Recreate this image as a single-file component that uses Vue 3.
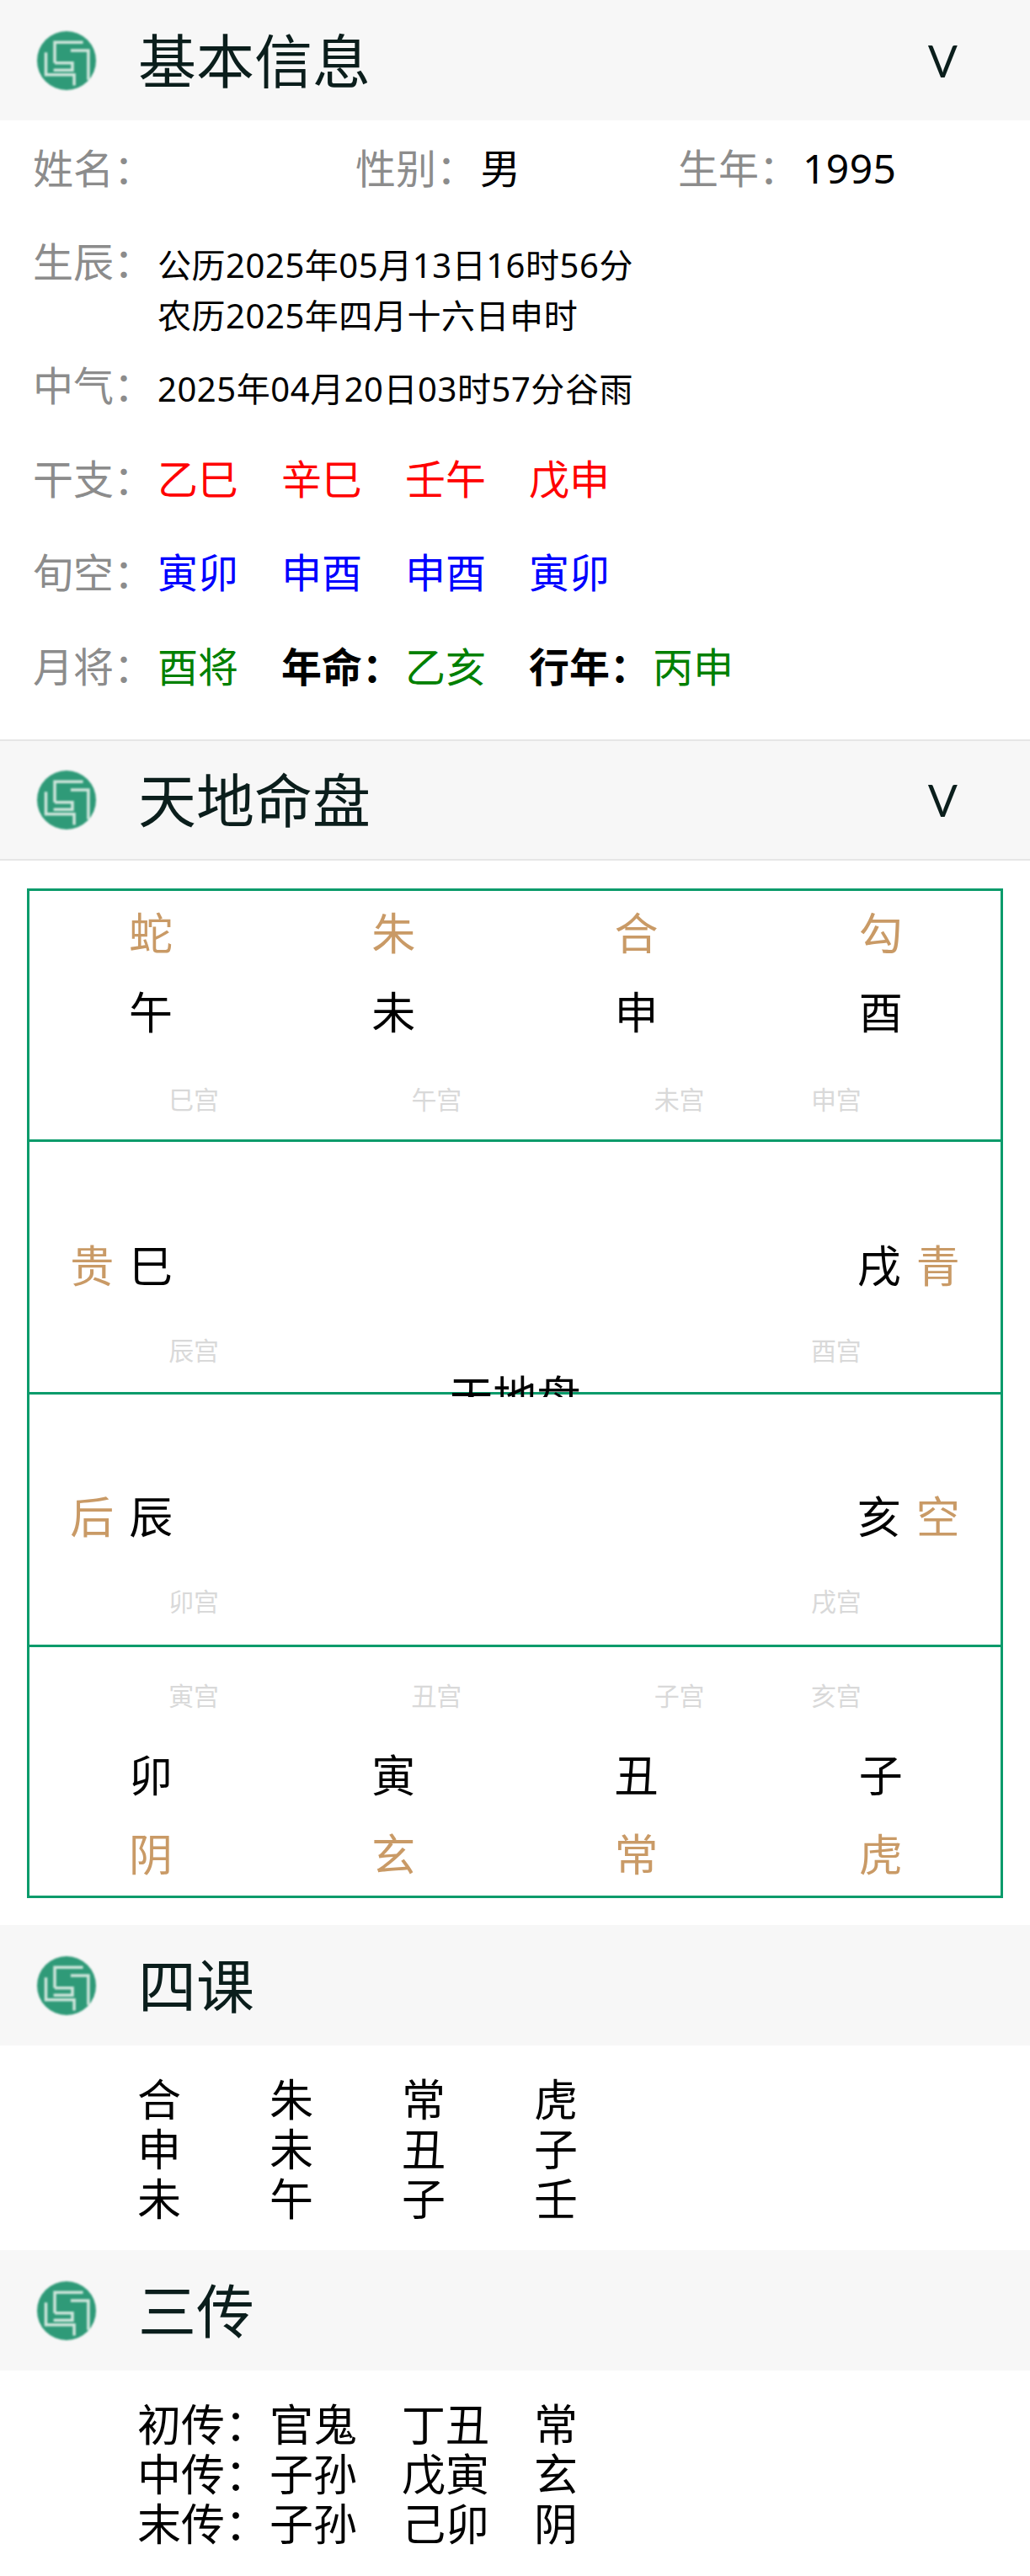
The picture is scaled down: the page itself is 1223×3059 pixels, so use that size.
<script setup>
const topCells = [
  { god: '蛇', branch: '午', gong: '巳宫' },
  { god: '朱', branch: '未', gong: '午宫' },
  { god: '合', branch: '申', gong: '未宫' },
  { god: '勾', branch: '酉', gong: '申宫' },
];
const bottomCells = [
  { god: '阴', branch: '卯', gong: '寅宫' },
  { god: '玄', branch: '寅', gong: '丑宫' },
  { god: '常', branch: '丑', gong: '子宫' },
  { god: '虎', branch: '子', gong: '亥宫' },
];
const middleRows = [
  { left: { god: '贵', branch: '巳', gong: '辰宫' }, right: { god: '青', branch: '戌', gong: '酉宫' } },
  { left: { god: '后', branch: '辰', gong: '卯宫' }, right: { god: '空', branch: '亥', gong: '戌宫' } },
];
const siKe = [
  ['合', '朱', '常', '虎'],
  ['申', '未', '丑', '子'],
  ['未', '午', '子', '壬'],
];
const sanChuan = [
  ['初传：', '官鬼', '丁丑', '常'],
  ['中传：', '子孙', '戊寅', '玄'],
  ['末传：', '子孙', '己卯', '阴'],
];
</script>

<template>
  <div class="page">
    <svg class="defs" width="0" height="0">
      <symbol id="logo" viewBox="-50 -50 100 100">
        <circle r="50" fill="#2f9a78" />
        <g fill="none" stroke="#cfe6dc" stroke-width="5">
          <path d="M-20 4V-31H28" />
          <path d="M7 -17H37V33" />
          <path d="M-35 -14V24H13V42" />
          <path d="M-20 4H10V16H-22" />
        </g>
      </symbol>
    </svg>

    <header class="head">
      <svg class="logo"><use href="#logo" /></svg>
      <span class="head-title">基本信息</span>
      <span class="head-arrow">V</span>
    </header>

    <section class="info">
      <div class="info-top">
        <div><span class="label">姓名：</span></div>
        <div><span class="label">性别：</span><span class="val">男</span></div>
        <div><span class="label">生年：</span><span class="val num">1995</span></div>
      </div>
      <div class="info-row birth">
        <span class="label">生辰：</span>
        <div class="small">
          <div>公历2025年05月13日16时56分</div>
          <div>农历2025年四月十六日申时</div>
        </div>
      </div>
      <div class="info-row qi">
        <span class="label">中气：</span>
        <div class="small">2025年04月20日03时57分谷雨</div>
      </div>
      <div class="info-row ganzhi">
        <span class="label">干支：</span>
        <span class="item red">乙巳</span><span class="item red">辛巳</span><span class="item red">壬午</span><span class="item red">戊申</span>
      </div>
      <div class="info-row xunkong">
        <span class="label">旬空：</span>
        <span class="item blue">寅卯</span><span class="item blue">申酉</span><span class="item blue">申酉</span><span class="item blue">寅卯</span>
      </div>
      <div class="info-row yuejiang">
        <span class="label">月将：</span>
        <span class="item green">酉将</span><span class="item bold">年命：</span><span class="item green">乙亥</span><span class="item bold">行年：</span><span class="item green">丙申</span>
      </div>
    </section>

    <header class="head lined">
      <svg class="logo"><use href="#logo" /></svg>
      <span class="head-title">天地命盘</span>
      <span class="head-arrow">V</span>
    </header>

    <section class="board">
      <div class="row top edge">
        <div v-for="(c, i) in topCells" :key="c.gong" class="cell">
          <div class="god">{{ c.god }}</div>
          <div class="branch">{{ c.branch }}</div>
          <div class="gong" :class="{ last: i === 3 }">{{ c.gong }}</div>
        </div>
      </div>

      <div v-for="(r, i) in middleRows" :key="r.left.gong" class="row middle" :class="{ second: i === 1 }">
        <div class="cell">
          <div class="side left"><span class="god">{{ r.left.god }}</span><span class="branch">{{ r.left.branch }}</span></div>
          <div class="gong">{{ r.left.gong }}</div>
        </div>
        <div class="cell wide"></div>
        <div class="cell">
          <div class="side right"><span class="branch">{{ r.right.branch }}</span><span class="god">{{ r.right.god }}</span></div>
          <div class="gong last">{{ r.right.gong }}</div>
        </div>
      </div>

      <div class="row bottom edge">
        <div v-for="(c, i) in bottomCells" :key="c.gong" class="cell">
          <div class="gong" :class="{ last: i === 3 }">{{ c.gong }}</div>
          <div class="branch">{{ c.branch }}</div>
          <div class="god">{{ c.god }}</div>
        </div>
      </div>

      <div class="center-name">天地盘</div>
    </section>

    <header class="head after-board">
      <svg class="logo"><use href="#logo" /></svg>
      <span class="head-title">四课</span>
    </header>
    <section class="lines">
      <div v-for="(line, i) in siKe" :key="i" class="line">
        <span v-for="(w, j) in line" :key="j">{{ w }}</span>
      </div>
    </section>

    <header class="head">
      <svg class="logo"><use href="#logo" /></svg>
      <span class="head-title">三传</span>
    </header>
    <section class="lines">
      <div v-for="(line, i) in sanChuan" :key="i" class="line">
        <span v-for="(w, j) in line" :key="j">{{ w }}</span>
      </div>
    </section>
  </div>
</template>

<style scoped>
.page {
  width: 1223px;
  height: 3059px;
  overflow: hidden;
  background: #fff;
  color: #000;
  font-family: "Noto Sans", "Noto Sans CJK SC", sans-serif;
}

.defs {
  position: absolute;
}

.head {
  display: flex;
  align-items: center;
  height: 143px;
  background: #f7f7f7;
  color: #0b1e1c;
  box-sizing: border-box;
}

.head.lined {
  height: 144px;
  border-top: 2px solid #e6e6e6;
  border-bottom: 2px solid #e6e6e6;
}

.head.after-board {
  margin-top: 32px;
}

.logo {
  width: 70px;
  height: 70px;
  margin-left: 44px;
  filter: blur(0.8px);
  flex-shrink: 0;
}

.head-title {
  margin-left: 50px;
  font-size: 69px;
  line-height: 80px;
}

.head-arrow {
  margin-left: auto;
  margin-right: 86px;
  font-family: Lato, sans-serif;
  font-size: 52px;
}

.info {
  height: 735px;
  box-sizing: border-box;
  padding: 27px 0 0 39px;
  font-size: 48px;
  line-height: 60px;
}

.info-top {
  display: grid;
  grid-template-columns: 383px 383px 380px;
}

.label {
  display: inline-block;
  width: 148px;
  color: #8c8c8c;
  flex-shrink: 0;
}

.info-row {
  display: flex;
  align-items: flex-start;
}

.small {
  font-size: 40px;
  margin-top: 4px;
  letter-spacing: 0.55px;
}

.num {
  letter-spacing: 0.4px;
}

.birth {
  margin-top: 51px;
}

.qi {
  margin-top: 23px;
}

.ganzhi {
  margin-top: 47px;
}

.xunkong {
  margin-top: 51px;
}

.yuejiang {
  margin-top: 52px;
}

.item {
  width: 147px;
}

.item.red {
  color: #f00;
}

.item.blue {
  color: #00f;
}

.item.green {
  color: #008000;
}

.item.bold {
  font-weight: 700;
}

.board {
  position: relative;
  margin: 33px 32px 0;
  border: 3px solid #0a9b6b;
  font-size: 52px;
}

.row {
  display: grid;
  grid-template-columns: repeat(4, 1fr);
  position: relative;
  background: #fff;
  height: 297px;
  box-sizing: content-box;
  border-bottom: 3px solid #0a9b6b;
}

.row.edge {
  height: 295px;
}

.row.bottom {
  border-bottom: none;
}

.row.middle {
  grid-template-columns: 1fr 2fr 1fr;
}

.cell {
  display: flex;
  flex-direction: column;
  align-items: center;
  min-width: 0;
}

.god {
  color: #c99a66;
  line-height: 94px;
}

.branch {
  line-height: 94px;
}

.gong {
  font-size: 30px;
  line-height: 40px;
  color: #d9d9d9;
  margin-left: 102px;
}

.gong.last {
  margin-left: 0;
  margin-right: 106px;
}

.top .cell {
  padding-top: 3px;
}

.top .cell:last-child,
.bottom .cell:last-child {
  padding-left: 4px;
}

.top .gong {
  margin-top: 37px;
}

.bottom .cell {
  padding-top: 38px;
}

.bottom .branch {
  margin-top: 27px;
}

.middle .cell {
  padding-top: 100px;
}

.middle.second .cell {
  padding-top: 98px;
}

.middle .gong {
  margin-top: 34px;
}

.middle .gong.last {
  margin-right: 102px;
}

.side {
  display: flex;
  gap: 18px;
  width: 100%;
  box-sizing: border-box;
}

.side.left {
  justify-content: flex-end;
  padding-right: 118px;
}

.side.right {
  padding-left: 118px;
}

.center-name {
  position: absolute;
  top: 570px;
  left: 0;
  right: 0;
  text-align: center;
  line-height: 60px;
  height: 31px;
  overflow: hidden;
}

.lines {
  padding: 34px 0 0 163px;
  height: 243px;
  box-sizing: border-box;
  font-size: 52px;
  line-height: 59px;
}

.line {
  display: grid;
  grid-template-columns: 157px 157px 157px 100px;
}
</style>

<style>
html,
body {
  margin: 0;
  padding: 0;
}
</style>
